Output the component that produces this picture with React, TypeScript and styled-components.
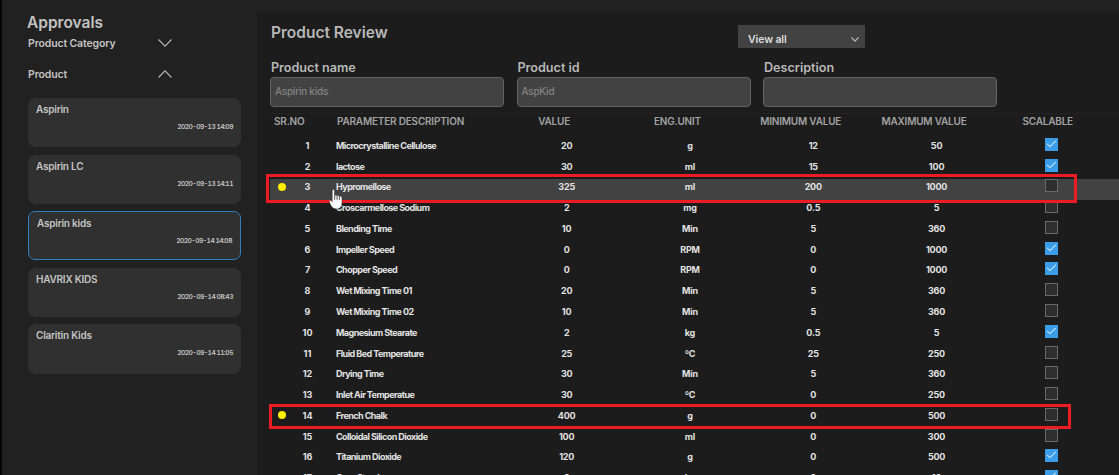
import React from "react";
import styled, { createGlobalStyle } from "styled-components";

const GlobalStyle = createGlobalStyle`
  * { box-sizing: border-box; }
  body {
    margin: 0;
    background: #1c1c1c;
    color: #c4c4c4;
    font-family: Inter, Roboto, "Liberation Sans", sans-serif;
    overflow: hidden;
  }
`;

const Page = styled.div`
  display: flex;
  width: 1119px;
  height: 475px;
  overflow: hidden;
`;

const Sidebar = styled.aside`
  flex: 0 0 257px;
  height: 475px;
  padding: 14px 0 0 26px;
  background: #212121;
  border-left: 2px solid #050505;
`;

const SidebarTitle = styled.h1`
  margin: 0 0 0 -1px;
  font-size: 15.5px;
  line-height: 18px;
  font-weight: 600;
`;

const Section = styled.div<{ $gap: number }>`
  display: flex;
  align-items: center;
  width: 144px;
  height: 14px;
  margin-top: ${(p) => p.$gap}px;
  justify-content: space-between;
  font-size: 10.5px;
  font-weight: 600;
  letter-spacing: -0.13px;
  white-space: nowrap;
`;

const CardList = styled.div`
  display: flex;
  flex-direction: column;
  gap: 7.4px;
  margin-top: 17px;
`;

const Card = styled.div<{ $active?: boolean }>`
  width: 213px;
  height: 49.2px;
  padding: ${(p) => (p.$active ? "4px 8px 0 8px" : "3px 7px 0 7px")};
  border: 1px solid ${(p) => (p.$active ? "#2f7fc1" : "#303030")};
  border-radius: 7px;
  background: #303030;
`;

const CardTitle = styled.div`
  font-size: 10px;
  line-height: 14px;
  font-weight: 600;
  letter-spacing: -0.23px;
`;

const CardDate = styled.div`
  margin-top: 6px;
  text-align: right;
  font-size: 6.7px;
  line-height: 10px;
  font-weight: 600;
  font-variant-numeric: tabular-nums;
  letter-spacing: -0.52px;
`;

const Main = styled.main`
  flex: 1;
  min-width: 0;
  padding-left: 13px;
  border-top: 12px solid #212121;
`;

const TopBar = styled.div`
  display: flex;
  height: 47px;
  align-items: flex-start;
  justify-content: space-between;
  padding: 13px 254px 0 1px;
`;

const MainTitle = styled.h2`
  margin: -2px 0 0;
  font-size: 15.5px;
  line-height: 20px;
  font-weight: 600;
  color: #b8b8b8;
`;

const Select = styled.div`
  display: flex;
  align-items: center;
  justify-content: space-between;
  width: 127px;
  height: 23px;
  padding: 5px 6px 0 10px;
  background: #424242;
  color: #dedede;
  font-size: 10.5px;
  font-weight: 600;
  letter-spacing: -0.1px;
`;

const Fields = styled.div`
  display: flex;
  gap: 12.5px;
`;

const Field = styled.div`
  width: 234px;
`;

const Label = styled.div`
  padding-left: 1px;
  height: 18px;
  color: #b8b8b8;
  font-size: 12.6px;
  line-height: 18px;
  font-weight: 600;
`;

const Input = styled.div`
  height: 30px;
  padding: 0 4px;
  border: 1px solid #626262;
  border-radius: 4px;
  background: #424242;
  color: #848484;
  font-size: 10px;
  font-weight: 500;
  letter-spacing: -0.25px;
  line-height: 26px;
`;

const columns = "66px 169px repeat(4, 123.3px) 107px";

const Table = styled.div`
  margin-top: 5.7px;
  border-top: 1px solid #232323;
`;

const HeadRow = styled.div`
  display: grid;
  grid-template-columns: ${columns};
  height: 24.2px;
  color: #a2a2a2;
  font-size: 10px;
  line-height: 15px;
  font-weight: 600;
  letter-spacing: -0.2px;
  text-align: center;
  white-space: nowrap;
`;

const HeadCell = styled.div<{ $kind?: "first" | "left" | "last" }>`
  text-align: ${(p) => (p.$kind === "first" || p.$kind === "left" ? "left" : "center")};
  padding: ${(p) =>
    p.$kind === "first" ? "0 0 0 4px" : p.$kind === "left" ? "0 0 0 1px" : p.$kind === "last" ? "0 8px 0 0" : "0 25px 0 0"};
`;

const Row = styled.div<{ $hover?: boolean }>`
  position: relative;
  display: grid;
  grid-template-columns: ${columns};
  height: 20.78px;
  background: ${(p) => (p.$hover ? "#424242" : "transparent")};
  color: #e2e2e2;
  font-size: 9px;
  line-height: 16px;
  font-weight: 700;
  text-align: center;
  white-space: nowrap;
`;

const NumberCell = styled.div`
  padding-left: 9px;
`;

const NameCell = styled.div`
  text-align: left;
  letter-spacing: -0.55px;
`;

const Cell = styled.div`
  letter-spacing: -0.2px;
`;

const Dot = styled.span`
  position: absolute;
  left: 8px;
  top: 3.5px;
  width: 8px;
  height: 8px;
  border-radius: 50%;
  background: #ffee00;
`;

const Check = styled.div<{ $on: boolean }>`
  display: flex;
  width: 13px;
  height: 13px;
  margin: 0 auto;
  border: 1px solid ${(p) => (p.$on ? "#3b9de8" : "#6a6a6a")};
  background: ${(p) => (p.$on ? "#3b9de8" : "#2e2e2e")};
`;

const Highlight = styled.div<{ $l: number; $t: number; $w: number; $h: number }>`
  position: absolute;
  z-index: 2;
  left: ${(p) => p.$l}px;
  top: ${(p) => p.$t}px;
  width: ${(p) => p.$w}px;
  height: ${(p) => p.$h}px;
  border: 3px solid #ed1c24;
`;

const Pointer = styled.svg`
  position: absolute;
  z-index: 3;
  left: 59px;
  top: 10px;
`;

const Chevron = ({ up = false, width = 14, height = 8 }: { up?: boolean; width?: number; height?: number }) => (
  <svg width={width} height={height} viewBox={`0 0 ${width} ${height}`} fill="none" stroke="#b8b8b8" strokeWidth="1.1">
    <path
      d={
        up
          ? `M.5 ${height - 0.5} L${width / 2} .8 L${width - 0.5} ${height - 0.5}`
          : `M.5 .5 L${width / 2} ${height - 0.8} L${width - 0.5} .5`
      }
    />
  </svg>
);

const products = [
  ["Aspirin", "2020-09-13 14:09"],
  ["Aspirin LC", "2020-09-13 14:11"],
  ["Aspirin kids", "2020-09-14 14:08"],
  ["HAVRIX KIDS", "2020-09-14 08:43"],
  ["Claritin Kids", "2020-09-14 11:05"],
];

type Parameter = [string, string, string, string, string, boolean];

const parameters: Parameter[] = [
  ["Microcrystalline Cellulose", "20", "g", "12", "50", true],
  ["lactose", "30", "ml", "15", "100", true],
  ["Hypromellose", "325", "ml", "200", "1000", false],
  ["Croscarmellose Sodium", "2", "mg", "0.5", "5", false],
  ["Blending Time", "10", "Min", "5", "360", false],
  ["Impeller Speed", "0", "RPM", "0", "1000", true],
  ["Chopper Speed", "0", "RPM", "0", "1000", true],
  ["Wet Mixing Time 01", "20", "Min", "5", "360", false],
  ["Wet Mixing Time 02", "10", "Min", "5", "360", false],
  ["Magnesium Stearate", "2", "kg", "0.5", "5", true],
  ["Fluid Bed Temperature", "25", "ºC", "25", "250", false],
  ["Drying Time", "30", "Min", "5", "360", false],
  ["Inlet Air Temperatue", "30", "ºC", "0", "250", false],
  ["French Chalk", "400", "g", "0", "500", false],
  ["Colloidal Silicon Dioxide", "100", "ml", "0", "300", false],
  ["Titanium Dioxide", "120", "g", "0", "500", true],
  ["Corn Starch", "2", "kg", "0", "10", true],
];

export default function App() {
  return (
    <Page>
      <GlobalStyle />
      <Sidebar>
        <SidebarTitle>Approvals</SidebarTitle>
        <Section $gap={4}>
          Product Category
          <Chevron />
        </Section>
        <Section $gap={17}>
          Product
          <Chevron up />
        </Section>
        <CardList>
          {products.map(([name, date], i) => (
            <Card key={name} $active={i === 2}>
              <CardTitle>{name}</CardTitle>
              <CardDate>{date}</CardDate>
            </Card>
          ))}
        </CardList>
      </Sidebar>
      <Main>
        <TopBar>
          <MainTitle>Product Review</MainTitle>
          <Select>
            View all
            <Chevron width={8} height={5} />
          </Select>
        </TopBar>
        <Fields>
          <Field>
            <Label>Product name</Label>
            <Input>Aspirin kids</Input>
          </Field>
          <Field>
            <Label>Product id</Label>
            <Input>AspKid</Input>
          </Field>
          <Field>
            <Label>Description</Label>
            <Input />
          </Field>
        </Fields>
        <Table>
          <HeadRow>
            <HeadCell $kind="first">SR.NO</HeadCell>
            <HeadCell $kind="left">PARAMETER DESCRIPTION</HeadCell>
            <HeadCell>VALUE</HeadCell>
            <HeadCell>ENG.UNIT</HeadCell>
            <HeadCell>MINIMUM VALUE</HeadCell>
            <HeadCell>MAXIMUM VALUE</HeadCell>
            <HeadCell $kind="last">SCALABLE</HeadCell>
          </HeadRow>
          {parameters.map(([name, value, unit, min, max, scalable], i) => (
            <Row key={name} $hover={i === 2}>
              <NumberCell>{i + 1}</NumberCell>
              <NameCell>{name}</NameCell>
              <Cell>{value}</Cell>
              <Cell>{unit}</Cell>
              <Cell>{min}</Cell>
              <Cell>{max}</Cell>
              <Check $on={scalable}>
                {scalable && (
                  <svg width="11" height="11" viewBox="0 0 11 11" fill="none" stroke="#c4e4fb" strokeWidth="1.1">
                    <path d="M1 4.8 L4 7.6 L9.8 1.8" />
                  </svg>
                )}
              </Check>
              {(i === 2 || i === 13) && <Dot />}
              {i === 2 && <Highlight $l={-4} $t={-5.2} $w={811} $h={29} />}
              {i === 13 && <Highlight $l={-1} $t={-3.8} $w={802} $h={25} />}
              {i === 2 && (
                <Pointer width="15" height="21" viewBox="0 0 15 21">
                  <path
                    d="M3.2 1.7c0-1.6 2.4-1.6 2.4 0v4.8l1-.5 1.3.6 1-.3 1.2.8 1-.2 1.9 1.2v5.6c0 3.8-2 6.3-5.6 6.3-3 0-4.6-1.8-6-4.4L.4 12.8c-.5-1.3 1-2 1.9-1.1l.9 1z"
                    fill="#fff"
                    stroke="#222"
                    strokeWidth=".5"
                  />
                  <path d="M5.7 6.5v4.3M8.1 6.8v4M10.4 7.3v3.5" stroke="#222" strokeWidth=".8" />
                </Pointer>
              )}
            </Row>
          ))}
        </Table>
      </Main>
    </Page>
  );
}
